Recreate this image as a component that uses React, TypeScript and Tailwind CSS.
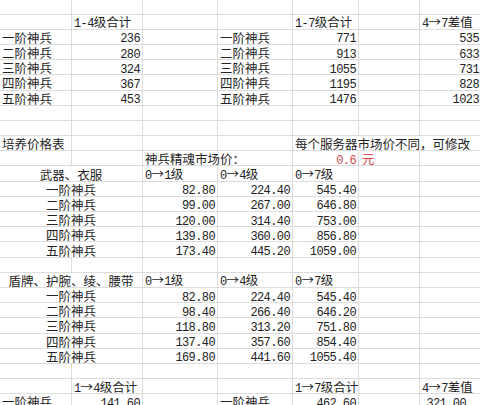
import React from "react";

type C = { t?: string; a?: "l" | "r" | "c"; s?: number; nr?: boolean; red?: boolean; x?: string };

const E: C = {};
const ranks = ["一阶神兵", "二阶神兵", "三阶神兵", "四阶神兵", "五阶神兵"];

function Txt({ s }: { s: string }) {
  const parts = s.match(/[\x00-\x7F]+|[^\x00-\x7F]+/g) || [];
  return (
    <span className="leading-none">
      {parts.map((p, i) =>
        /^[\x00-\x7F]+$/.test(p) ? (
          <span
            key={i}
            className="inline-block leading-none font-['Liberation_Mono',monospace] text-[12px] tracking-[-0.6px] whitespace-pre"
          >
            {p}
          </span>
        ) : (
          <span key={i} className="inline-block leading-none font-['Noto_Sans_CJK_SC',sans-serif] text-[12.5px]">
            {p}
          </span>
        )
      )}
    </span>
  );
}

function Cell({ c }: { c: C }) {
  const cls = [
    "h-[15.2px] border-b border-[#dcdcdc] flex items-center whitespace-nowrap overflow-visible leading-none",
    c.nr ? "" : "border-r",
    c.a === "r" ? "justify-end pr-[2px]" : c.a === "c" ? "justify-center" : "pl-[2px]",
    c.s === 2 ? "col-span-2" : "",
    c.red ? "text-[#d24a4a]" : "text-[#222222]",
    c.x || "",
  ].join(" ");
  return <div className={cls}>{c.t ? <Txt s={c.t} /> : null}</div>;
}

const empty = (): C[] => [E, E, E, E, E, E, E];

function buildRows(): C[][] {
  const rows: C[][] = [];
  rows.push(empty());
  rows.push([E, { t: "1-4级合计", a: "l" }, E, E, { t: "1-7级合计", a: "l" }, E, { t: "4→7差值", a: "l" }]);
  const b = ["236", "280", "324", "367", "453"];
  const e = ["771", "913", "1055", "1195", "1476"];
  const g = ["535", "633", "731", "828", "1023"];
  ranks.forEach((r, i) =>
    rows.push([
      { t: r, a: "l" },
      { t: b[i], a: "r" },
      E,
      { t: r, a: "l" },
      { t: e[i], a: "r" },
      E,
      { t: g[i], a: "r" },
    ])
  );
  rows.push(empty());
  rows.push(empty());
  rows.push([
    { t: "培养价格表", a: "l" },
    E,
    E,
    E,
    { t: "每个服务器市场价不同，可修改", a: "l", nr: true },
    { nr: true },
    E,
  ]);
  rows.push([
    E,
    E,
    { t: "神兵精魂市场价：", a: "l", nr: true },
    E,
    { t: "0.6", a: "r", red: true },
    { t: "元", a: "l", red: true, x: "pl-[3px]" },
    E,
  ]);
  const sec = (title: string, c: string[], d: string[], f: string[]) => {
    rows.push([
      { t: title, a: "c", s: 2 },
      { t: "0→1级", a: "l" },
      { t: "0→4级", a: "l" },
      { t: "0→7级", a: "l" },
      E,
      E,
    ]);
    ranks.forEach((r, i) =>
      rows.push([{ t: r, a: "c", s: 2 }, { t: c[i], a: "r" }, { t: d[i], a: "r" }, { t: f[i], a: "r" }, E, E])
    );
  };
  sec(
    "武器、衣服",
    ["82.80", "99.00", "120.00", "139.80", "173.40"],
    ["224.40", "267.00", "314.40", "360.00", "445.20"],
    ["545.40", "646.80", "753.00", "856.80", "1059.00"]
  );
  rows.push(empty());
  sec(
    "盾牌、护腕、绫、腰带",
    ["82.80", "98.40", "118.80", "137.40", "169.80"],
    ["224.40", "266.40", "313.20", "357.60", "441.60"],
    ["545.40", "646.20", "751.80", "854.40", "1055.40"]
  );
  rows.push(empty());
  rows.push([E, { t: "1→4级合计", a: "l" }, E, E, { t: "1→7级合计", a: "l" }, E, { t: "4→7差值", a: "l" }]);
  rows.push([
    { t: "一阶神兵", a: "l" },
    { t: "141.60", a: "r" },
    E,
    { t: "一阶神兵", a: "l" },
    { t: "462.60", a: "r" },
    E,
    { t: "321.00", a: "r", x: "pr-[15px]" },
  ]);
  return rows;
}

export default function App() {
  const rows = buildRows();
  return (
    <div className="w-[480px] h-[405px] overflow-hidden bg-white">
      <div className="mt-[-0.6px] grid grid-cols-[72px_71px_75px_75px_66px_61px_62px] w-[482px]">
        {rows.map((r, i) => (
          <React.Fragment key={i}>
            {r.map((c, j) => (
              <Cell key={j} c={c} />
            ))}
          </React.Fragment>
        ))}
      </div>
    </div>
  );
}
